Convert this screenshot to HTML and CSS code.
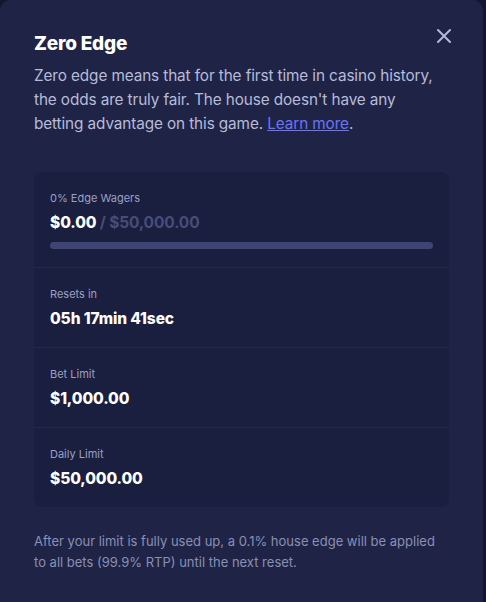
FILE: index.html
```html
<!DOCTYPE html>
<html lang="en">
<head>
<meta charset="utf-8">
<title>Zero Edge</title>
<link rel="stylesheet" href="styles.css">
</head>
<body>
<div class="modal">
  <button class="close" aria-label="Close">
    <svg width="16" height="16" viewBox="0 0 16 16"><path d="M2 2 L14 14 M14 2 L2 14" stroke="currentColor" stroke-width="2" stroke-linecap="round"/></svg>
  </button>
  <h1 class="title">Zero Edge</h1>
  <p class="desc">Zero edge means that for the first time in casino history, the odds are truly fair. The house doesn't have any betting advantage on this game. <a href="#" class="link">Learn more</a>.</p>
  <div class="card">
    <div class="row">
      <div class="label">0% Edge Wagers</div>
      <div class="value">$0.00 <span class="muted">/ $50,000.00</span></div>
      <div class="bar"><div class="fill" style="width:0%"></div></div>
    </div>
    <div class="row">
      <div class="label">Resets in</div>
      <div class="value">05h 17min 41sec</div>
    </div>
    <div class="row">
      <div class="label">Bet Limit</div>
      <div class="value">$1,000.00</div>
    </div>
    <div class="row">
      <div class="label">Daily Limit</div>
      <div class="value">$50,000.00</div>
    </div>
  </div>
  <p class="note">After your limit is fully used up, a 0.1% house edge will be applied to all bets (99.9% RTP) until the next reset.</p>
</div>
</body>
</html>
```
FILE: styles.css
```css
html, body {
  margin: 0;
  padding: 0;
  background: #13162f;
  height: 100%;
}
body {
  font-family: Inter, "Noto Sans", sans-serif;
  overflow: hidden;
}
.modal {
  position: relative;
  box-sizing: border-box;
  width: 483px;
  min-height: 602px;
  background: #1f2446;
  border-radius: 10px 10px 0 0;
  padding: 30px 37px 0 34px;
}
.close {
  position: absolute;
  top: 28px;
  right: 31px;
  background: none;
  border: 0;
  padding: 0;
  color: #b4b8d8;
  width: 16px;
  height: 16px;
  display: flex;
}
.title {
  margin: 0;
  font-size: 19px;
  line-height: 28px;
  font-weight: 800;
  color: #ffffff;
  letter-spacing: -0.2px;
}
.desc {
  margin: 6px 0 0;
  font-size: 15.3px;
  line-height: 24px;
  color: #b7bbd9;
  letter-spacing: -0.1px;
}
.link {
  color: #6b73ff;
  text-decoration: underline;
}
.card {
  margin-top: 36px;
  background: #1a1e3f;
  border-radius: 8px;
  width: 415px;
  overflow: hidden;
}
.row {
  padding: 18px 16px;
  border-top: 1px solid #242949;
}
.row:first-child {
  border-top: 0;
}
.label {
  font-size: 11px;
  line-height: 16px;
  color: #9ba0c4;
}
.value {
  margin-top: 7px;
  font-size: 15.5px;
  line-height: 20px;
  font-weight: 800;
  color: #ffffff;
  letter-spacing: -0.1px;
}
.muted {
  color: #474d78;
  font-weight: 700;
}
.bar {
  margin-top: 9px;
  height: 7px;
  border-radius: 4px;
  background: #3e4474;
}
.fill {
  height: 100%;
  background: #7b82ff;
  border-radius: 4px;
}
.note {
  margin: 24px 0 0;
  font-size: 13px;
  line-height: 21px;
  color: #8a8fb5;
}
```
